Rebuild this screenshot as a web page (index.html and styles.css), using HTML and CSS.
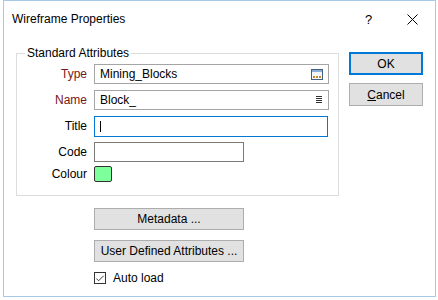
FILE: index.html
```html
<!DOCTYPE html>
<html>
<head>
<meta charset="utf-8">
<link rel="stylesheet" href="styles.css">
</head>
<body>
<div class="window">
  <div class="titlebar">
    <span class="title">Wireframe Properties</span>
    <span class="help">?</span>
    <svg class="close" width="11" height="11" viewBox="0 0 11 11"><path d="M0.5 0.5 L10.5 10.5 M10.5 0.5 L0.5 10.5" stroke="#000" stroke-width="1" fill="none"/></svg>
  </div>
  <div class="content">
    <div class="left">
      <fieldset class="group">
        <legend>Standard Attributes</legend>
        <div class="form">
          <label class="lbl req">Type</label>
          <div class="field wide light">
            <span class="val">Mining_Blocks</span>
            <svg class="browse" width="12" height="11" viewBox="0 0 12 11">
              <rect x="0.5" y="0.5" width="11" height="10" fill="#f4f6f9" stroke="#44607f"/>
              <rect x="1" y="1" width="10" height="2" fill="#8aaed6"/>
              <rect x="2" y="7" width="2" height="2" fill="#c98a2e"/>
              <rect x="5" y="7" width="2" height="2" fill="#c98a2e"/>
              <rect x="8" y="7" width="2" height="2" fill="#c98a2e"/>
            </svg>
          </div>
          <label class="lbl req">Name</label>
          <div class="field wide light">
            <span class="val">Block_</span>
            <svg class="menu" width="6" height="8" viewBox="0 0 6 8">
              <path d="M0 0.5 H6 M0 2.5 H6 M0 4.5 H6 M0 6.5 H6" stroke="#333" stroke-width="1"/>
            </svg>
          </div>
          <label class="lbl">Title</label>
          <div class="field wide2 focus"><span class="caret"></span></div>
          <label class="lbl">Code</label>
          <div class="field short dark"></div>
          <label class="lbl lbl-sm">Colour</label>
          <div class="swatchrow"><span class="swatch"></span></div>
        </div>
      </fieldset>
      <div class="actions">
        <button class="btn wbtn">Metadata ...</button>
        <button class="btn wbtn">User Defined Attributes ...</button>
        <label class="check"><span class="box"><svg width="11" height="11" viewBox="0 0 11 11"><path d="M1.5 5.5 L4 8 L9.5 2.5" stroke="#222" stroke-width="1" fill="none"/></svg></span>Auto load</label>
      </div>
    </div>
    <div class="right">
      <button class="btn dbtn ok">OK</button>
      <button class="btn dbtn"><u>C</u>ancel</button>
    </div>
  </div>
</div>
</body>
</html>
```

FILE: styles.css
```css
* { box-sizing: border-box; }
html, body { margin: 0; padding: 0; background: #fff; }
body {
  font-family: "Liberation Sans", Arial, sans-serif;
  font-size: 12px;
  color: #000;
}
.window {
  margin-left: 3px;
  width: 433px;
  height: 297px;
  border: 1px solid #a9c9e8;
  background: #fff;
}
.titlebar {
  height: 36px;
  display: flex;
  align-items: center;
  padding-left: 8px;
}
.title { flex: 1; font-size: 12px; }
.help { font-size: 13px; width: 8px; margin-right: 34px; }
.close { margin-right: 17px; }
.content {
  display: flex;
  padding-left: 12px;
  padding-top: 8px;
  gap: 10px;
}
.left { width: 323px; }
.group {
  margin: 0;
  padding: 0 0 11px 0;
  border: 1px solid #dcdcdc;
  min-width: 0;
}
.group legend {
  margin-left: 8px;
  padding: 0 2px;
  line-height: 16px;
}
.form {
  display: grid;
  grid-template-columns: 70px auto;
  grid-template-rows: 20px 20px 20px 20px 16px;
  column-gap: 7px;
  row-gap: 6px;
  padding-top: 3px;
  align-items: center;
}
.lbl { text-align: right; line-height: 20px; }
.lbl-sm { line-height: 16px; margin-top: -4px; }
.req { color: #7a1616; }
.field {
  height: 20px;
  border: 1px solid #a5a5a5;
  display: flex;
  align-items: center;
  padding: 0 5px 0 5px;
  background: #fff;
}
.wide { width: 235px; }
.wide2 { width: 234px; height: 21px; }
.short { width: 150px; }
.light { border-color: #a5a5a5; }
.dark { border-color: #7a7a7a; }
.focus { border-color: #0078d7; }
.val { flex: 1; }
.menu { margin-right: 1px; }
.caret { width: 1px; height: 11px; background: #000; }
.swatchrow { height: 16px; display: flex; align-items: center; margin-top: -4px; }
.swatch {
  width: 18px;
  height: 16px;
  border: 1px solid #333;
  border-radius: 2px;
  background: #7dff9c;
}
.actions {
  display: flex;
  flex-direction: column;
  align-items: flex-start;
  padding-left: 78px;
  padding-top: 12px;
  gap: 10px;
}
.btn {
  font-family: inherit;
  font-size: 12px;
  color: #000;
  background: #e1e1e1;
  border: 1px solid #adadad;
  padding: 0;
  margin: 0;
}
.wbtn { width: 150px; height: 22px; }
.check { display: flex; align-items: center; gap: 7px; line-height: 12px; }
.box {
  width: 12px; height: 12px;
  border: 1px solid #333;
  display: flex; align-items: center; justify-content: center;
  background: #fff;
}
.box svg { display: block; }
.right {
  display: flex;
  flex-direction: column;
  gap: 8px;
  padding-top: 7px;
}
.dbtn { width: 74px; height: 23px; }
.ok { border: 2px solid #0078d7; }
```
